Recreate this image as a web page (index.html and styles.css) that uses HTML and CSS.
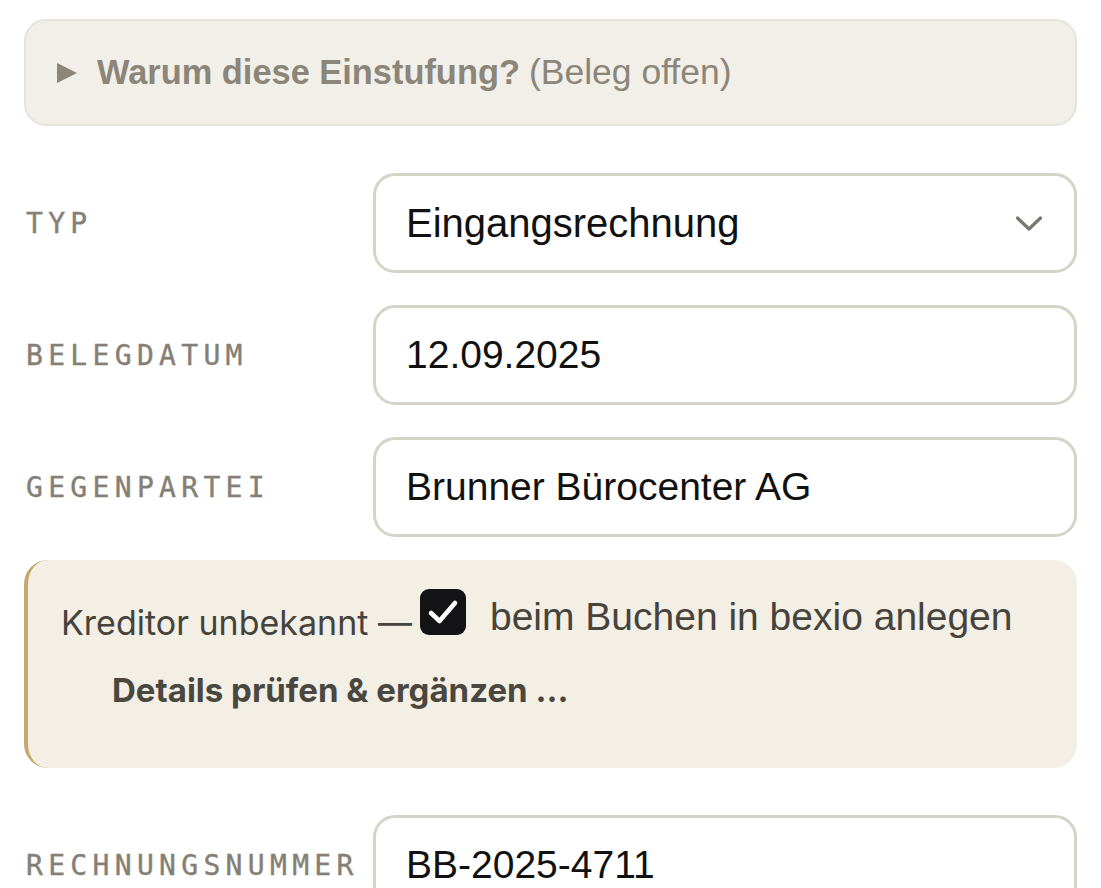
FILE: index.html
```html
<!DOCTYPE html>
<html lang="de">
<head>
<meta charset="utf-8">
<link rel="stylesheet" href="styles.css">
</head>
<body>
<div class="page">
  <details class="why">
    <summary class="why-summary"><span class="tri"></span><strong class="why-title">Warum diese Einstufung?</strong><span class="why-note">(Beleg offen)</span></summary>
  </details>

  <div class="row">
    <div class="label">TYP</div>
    <div class="field field-select">
      <span class="value">Eingangsrechnung</span>
      <svg class="chev" width="28" height="18" viewBox="0 0 28 18"><path d="M2.5 3 L14 14 L25.5 3" fill="none" stroke="#7a766d" stroke-width="3.2" stroke-linecap="round" stroke-linejoin="round"/></svg>
    </div>
  </div>

  <div class="row">
    <div class="label">BELEGDATUM</div>
    <div class="field"><span class="value">12.09.2025</span></div>
  </div>

  <div class="row">
    <div class="label">GEGENPARTEI</div>
    <div class="field"><span class="value">Brunner Bürocenter AG</span></div>
  </div>

  <div class="notice">
    <div class="notice-line">
      <span class="notice-text">Kreditor unbekannt —</span>
      <span class="check">
        <svg width="46" height="46" viewBox="0 0 46 46"><rect x="0" y="0" width="46" height="46" rx="9" fill="#131315"/><path d="M11 24 L19.5 32 L35 14" fill="none" stroke="#ffffff" stroke-width="4.6" stroke-linecap="round" stroke-linejoin="round"/></svg>
      </span>
      <span class="check-label">beim Buchen in bexio anlegen</span>
    </div>
    <div class="notice-action">Details prüfen &amp; ergänzen ...</div>
  </div>

  <div class="row row-last">
    <div class="label">RECHNUNGSNUMMER</div>
    <div class="field"><span class="value">BB-2025-4711</span></div>
  </div>
</div>
</body>
</html>
```

FILE: styles.css
```css
html, body {
  margin: 0;
  padding: 0;
  background: #ffffff;
  overflow: hidden;
}

.page {
  padding: 19px 24px 0 24px;
  display: flex;
  flex-direction: column;
  width: 1053px;
}

.why {
  background: #f1efe8;
  border: 2px solid #e5e3da;
  border-radius: 22px;
  height: 107px;
  box-sizing: border-box;
}

.why-summary {
  list-style: none;
  display: flex;
  align-items: center;
  height: 103px;
  box-sizing: border-box;
  padding-left: 31px;
  font-family: "Liberation Sans", Arial, sans-serif;
  color: #8b857a;
  white-space: nowrap;
}

.why-summary::-webkit-details-marker {
  display: none;
}

.tri {
  width: 0;
  height: 0;
  border-top: 10px solid transparent;
  border-bottom: 10px solid transparent;
  border-left: 20px solid #8b857a;
  margin-right: 20px;
}

.why-title {
  font-weight: 700;
  font-size: 34.4px;
}

.why-note {
  font-size: 35.5px;
  margin-left: 9px;
}

.row {
  display: flex;
  align-items: center;
  margin-top: 32px;
}

.row:nth-of-type(1) {
  margin-top: 47px;
}

.label {
  width: 347px;
  padding-left: 2px;
  font-family: "DejaVu Sans Mono", monospace;
  font-size: 28px;
  letter-spacing: 0.19em;
  color: #857f75;
  font-weight: 400;
  -webkit-text-stroke: 0.4px #857f75;
}

.field {
  flex: 1;
  height: 100px;
  box-sizing: border-box;
  border: 3px solid #d6d3c7;
  border-radius: 22px;
  background: #ffffff;
  display: flex;
  align-items: center;
  padding-left: 30px;
  padding-right: 31px;
  font-family: "Liberation Sans", Arial, sans-serif;
  font-size: 39px;
  color: #111111;
}

.field-select {
  justify-content: space-between;
  font-size: 40px;
}

.chev {
  display: block;
  margin-top: 2px;
}

.notice {
  margin-top: 23px;
  height: 208px;
  box-sizing: border-box;
  background: #f3efe4;
  border-left: 4px solid #c8a86a;
  border-radius: 24px;
  padding: 29px 20px 0 33px;
}

.notice-line {
  display: flex;
  align-items: flex-start;
}

.notice-text {
  font-family: Inter, sans-serif;
  font-size: 34px;
  color: #46433d;
  margin-top: 13px;
}

.check {
  display: block;
  width: 46px;
  height: 46px;
  margin-left: 8px;
}

.check svg {
  display: block;
}

.check-label {
  margin-left: 24px;
  margin-top: 6px;
  font-family: "Liberation Sans", Arial, sans-serif;
  font-size: 39px;
  color: #46433d;
}

.notice-action {
  margin-top: 27px;
  margin-left: 51px;
  font-family: Inter, sans-serif;
  font-weight: 700;
  font-size: 33px;
  color: #4a4740;
}

.row-last {
  margin-top: 47px;
}
```
